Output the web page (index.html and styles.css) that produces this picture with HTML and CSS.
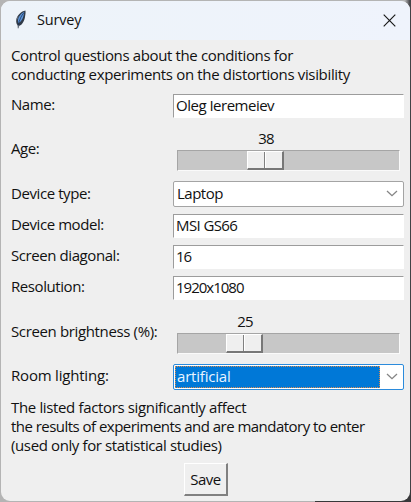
FILE: index.html
```html
<!DOCTYPE html>
<html lang="en">
<head>
<meta charset="utf-8">
<title>Survey</title>
<link rel="stylesheet" href="styles.css">
</head>
<body>
<main class="window">
  <header class="titlebar">
    <svg class="feather" width="12" height="20" viewBox="0 0 12 20">
      <path d="M10.4 .6C6.500 1.200 2 5.500 1.300 9.500C.9 12.200 1.500 14 2.600 15.300L3 19L4.100 16C8 14.500 9.500 10 10 7C10.400 4.500 10.800 2.500 10.400.6Z" fill="#303a48"/>
      <path d="M9.300 1.800C6 3.500 3.200 7 3 10.300L3.300 13.200C6.500 11.500 8 8.500 8.500 5.800Z" fill="#5b94da"/>
      <path d="M9 2.500C6.500 5.500 4.300 9.500 3.300 15.500" fill="none" stroke="#182e52" stroke-width=".7"/>
      <path d="M3.100 6.500L1.900 9.500M4 15L3.200 18" stroke="#777f89" stroke-width=".8"/>
    </svg>
    <h1 class="title">Survey</h1>
    <svg class="close" width="13" height="13" viewBox="0 0 13 13"><path d="M.7.700L12.300 12.300M12.300.700L.7 12.300" stroke="#171717" stroke-width="1.150"/></svg>
  </header>
  <p class="note intro"><span class="l1">Control questions about the conditions for</span><br><span class="l2">conducting experiments on the distortions visibility</span></p>
  <form class="form">
    <div class="row"><label>Name:</label><div class="entry name">Oleg Ieremeiev</div></div>
    <div class="row age"><label>Age:</label>
      <div class="scale"><div class="value v38">38</div><div class="trough"><div class="thumb t38"></div></div></div></div>
    <div class="row type"><label>Device type:</label>
      <div class="combo"><span class="choice">Laptop</span><svg class="chevron" width="12" height="7" viewBox="0 0 12 7"><path d="M1 1L6 5.700L11 1" /></svg></div></div>
    <div class="row"><label>Device model:</label><div class="entry model">MSI GS66</div></div>
    <div class="row"><label>Screen diagonal:</label><div class="entry num">16</div></div>
    <div class="row"><label>Resolution:</label><div class="entry num">1920x1080</div></div>
    <div class="row bright"><label>Screen brightness (%):</label>
      <div class="scale"><div class="value v25">25</div><div class="trough"><div class="thumb t25"></div></div></div></div>
    <div class="row light"><label>Room lighting:</label>
      <div class="combo focus"><span class="choice">artificial</span><svg class="chevron" width="12" height="7" viewBox="0 0 12 7"><path d="M1 1L6 5.700L11 1" /></svg></div></div>
  </form>
  <p class="note outro"><span class="l3">The listed factors significantly affect</span><br><span class="l4">the results of experiments and are mandatory to enter</span><br><span class="l5">(used only for statistical studies)</span></p>
  <div class="actions"><button class="save" type="button">Save</button></div>
</main>
</body>
</html>
```
FILE: styles.css
```css
* { box-sizing: border-box; }
body {
  margin: 0;
  width: 411px;
  height: 502px;
  padding: 1px;
  overflow: hidden;
  background: linear-gradient(90deg, #b4b4b4 0 315px, #38383a 315px) bottom / 100% 12px no-repeat,
    linear-gradient(90deg, #b4b4b4 0 405px, #424246 410px);
  font: 15px/19px "Open Sans", "Noto Sans", sans-serif;
  color: #111;
}
.window {
  display: flex;
  flex-direction: column;
  width: 409px;
  height: 500px;
  background: #efefef;
  border-radius: 9px;
  overflow: hidden;
}
.titlebar {
  display: flex;
  align-items: center;
  height: 39px;
  flex: none;
  padding: 0 14px;
  background: linear-gradient(90deg, #edf3f9, #eff3fc);
}
.feather { margin-top: -2px; }
.title { margin: -2px auto 0 10px; font: 400 14.5px/20px "Open Sans", sans-serif; letter-spacing: -.2px; }
.close { display: block; }
.note { margin: 0; padding-left: 10px; white-space: nowrap; }
.l1 { letter-spacing: -.36px; }
.l2 { letter-spacing: -.34px; }
.l3 { letter-spacing: -.35px; }
.l4 { letter-spacing: -.53px; }
.l5 { letter-spacing: -.38px; }
.intro { height: 50px; padding-top: 6px; flex: none; }
.form { flex: none; }
.row {
  display: grid;
  grid-template-columns: 162px 231px;
  align-items: center;
  height: 31px;
  padding-left: 10px;
  letter-spacing: -.5px;
}
.row label { padding-bottom: 2px; letter-spacing: -.42px; }
.age { height: 57px; }
.type { height: 32px; }
.bright { height: 58px; }
.bright label { letter-spacing: -.36px; }
.light label { letter-spacing: -.2px; }
.entry {
  height: 24px;
  padding: 0 2px;
  line-height: 20px;
  background: #fff;
  border: 1px solid #fff;
  border-top-color: #9c9c9c;
  border-left-color: #9c9c9c;
}
.num { letter-spacing: -1px; }
.model { letter-spacing: -.6px; }
.scale { padding: 0 4px; align-self: end; height: 49px; }
.value { width: 30px; line-height: 18px; height: 20px; text-align: center; letter-spacing: -.9px; }
.v38 { margin-left: 74px; }
.v25 { margin-left: 53px; }
.trough {
  height: 21px;
  margin-top: 1px;
  background: #c7c7c7;
  border: 1px solid #fafafa;
  border-top-color: #a5a5a5;
  border-left-color: #a5a5a5;
}
.thumb {
  width: 37px;
  height: 19px;
  background: linear-gradient(90deg, #efefef 16px, #808080 16px 17px, #fff 17px 18px, #efefef 18px);
  border: 1px solid #fff;
  border-right: 2px solid #777;
  border-bottom: 2px solid #777;
}
.t38 { margin-left: 69px; }
.t25 { margin-left: 48px; }
.combo {
  display: flex;
  align-items: center;
  height: 26px;
  padding: 1px 5px 1px 1px;
  background: #fff;
  border: 1px solid #a4a4a4;
  border-radius: 2px;
}
.type .combo { margin-top: -1px; }
.choice { width: 205px; height: 22px; padding-left: 1px; line-height: 18px; border: 1px solid transparent; }
.chevron { margin-left: auto; fill: none; stroke: #858585; stroke-width: 1.300; }
.focus { border-color: #2b8bdc; letter-spacing: -.2px; }
.focus .choice { color: #e9f4ff; background: #0078d7; border: 1px dotted #d38a51; }
.outro { padding-top: 6px; height: 71px; flex: none; }
.actions { padding-left: 183px; }
.save {
  display: block;
  width: 44px;
  height: 33px;
  padding: 0;
  font: inherit;
  letter-spacing: -.5px;
  color: #111;
  background: #efefef;
  border: 1px solid #fff;
  border-right: 2px solid #808080;
  border-bottom: 2px solid #808080;
}
```
